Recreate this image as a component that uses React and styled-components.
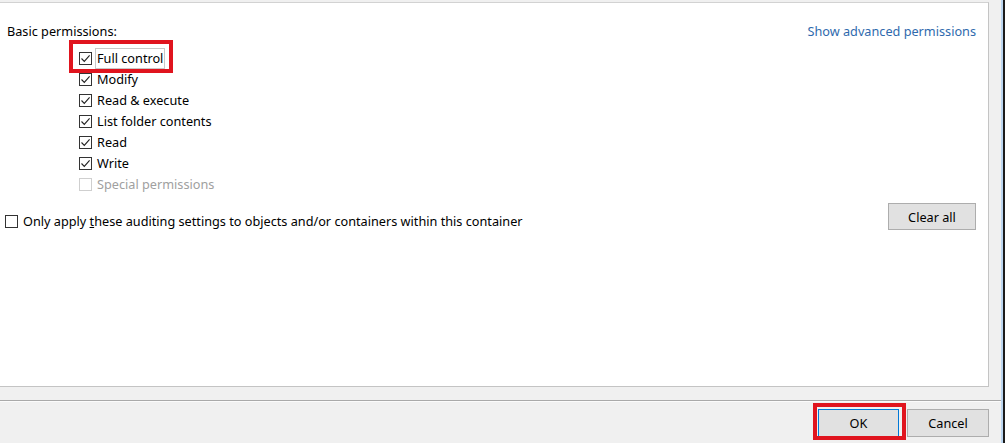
import React from "react";
import styled, { createGlobalStyle } from "styled-components";

const GlobalStyle = createGlobalStyle`
  html, body {
    margin: 0;
    padding: 0;
    width: 1005px;
    height: 443px;
    overflow: hidden;
    background: #f0f0f0;
  }
  body {
    font-family: "Noto Sans", "Open Sans", sans-serif;
    font-size: 12.7px;
    color: #000;
  }
`;

const permissions = [
  { label: "Full control", checked: true, focused: true },
  { label: "Modify", checked: true },
  { label: "Read & execute", checked: true },
  { label: "List folder contents", checked: true },
  { label: "Read", checked: true },
  { label: "Write", checked: true },
  { label: "Special permissions", checked: false, disabled: true },
];

const Check = ({ checked, disabled }) => (
  <Box disabled={disabled}>
    {checked && (
      <svg width="11" height="11" viewBox="0 0 11 11">
        <path d="M1.5 5.5 L4.3 8.4 L9.6 2.4" fill="none" stroke="#222" strokeWidth="1.1" />
      </svg>
    )}
  </Box>
);

const App = () => {
  return (
    <>
      <GlobalStyle />
      <Frame>
        <Main>
          <Panel>
            <Header>
              <Title>Basic permissions:</Title>
              <Link>Show advanced permissions</Link>
            </Header>
            <List>
              {permissions.map((p) => (
                <Item key={p.label} disabled={p.disabled}>
                  {p.focused && <Highlight />}
                  <Check checked={p.checked} disabled={p.disabled} />
                  <Label focused={p.focused}>{p.label}</Label>
                </Item>
              ))}
            </List>
            <ApplyRow>
              <ApplyLabel>
                <Check />
                <Label>
                  Only apply <u>t</u>hese auditing settings to objects and/or containers within this container
                </Label>
              </ApplyLabel>
              <Button wide>Clear all</Button>
            </ApplyRow>
          </Panel>
          <Footer>
            <ButtonSlot>
              <ButtonHighlight />
              <Button primary>OK</Button>
            </ButtonSlot>
            <Button>Cancel</Button>
          </Footer>
        </Main>
        <Edge />
      </Frame>
    </>
  );
};

const Frame = styled.div`
  display: flex;
  width: 1005px;
  height: 443px;
`;

const Main = styled.div`
  flex: 1;
  display: flex;
  flex-direction: column;
  padding-top: 2px;
`;

const Edge = styled.div`
  width: 2px;
  border-left: 2px solid #bcd6f0;
  background: #1b1b1b;
`;

const Panel = styled.div`
  height: 385px;
  margin-right: 12px;
  background: #fff;
  border-top: 1px solid #d2d2d2;
  border-right: 1px solid #c4c4c4;
  border-bottom: 1px solid #c4c4c4;
  padding: 18px 12px 0 5px;
  box-sizing: border-box;
`;

const Header = styled.div`
  display: flex;
  justify-content: space-between;
  line-height: 21px;
`;

const Title = styled.span`
  margin-left: 2px;
`;

const Link = styled.span`
  color: #2f6aad;
  cursor: pointer;
`;

const List = styled.div`
  display: flex;
  flex-direction: column;
  margin-top: 6px;
  padding-left: 74px;
`;

const Item = styled.label`
  position: relative;
  display: flex;
  align-items: center;
  height: 21px;
  gap: 4px;
  color: ${(p) => (p.disabled ? "#a0a0a0" : "#000")};
`;

const Box = styled.span`
  width: 13px;
  height: 13px;
  box-sizing: border-box;
  border: 1px solid ${(p) => (p.disabled ? "#cfcfcf" : "#333")};
  background: #fff;
  display: flex;
  align-items: center;
  justify-content: center;
  flex-shrink: 0;
`;

const Label = styled.span`
  line-height: 19px;
  padding: 0 1px;
  border: 1px solid ${(p) => (p.focused ? "#c8c8c8" : "transparent")};
  margin-left: -1px;
  white-space: nowrap;
`;

const Highlight = styled.span`
  position: absolute;
  left: -10px;
  top: -8px;
  width: 104px;
  height: 33px;
  box-sizing: border-box;
  border: 4px solid #e0141e;
  pointer-events: none;
`;

const ApplyRow = styled.div`
  display: flex;
  justify-content: space-between;
  align-items: flex-start;
  margin-top: 8px;
`;

const ApplyLabel = styled.label`
  display: flex;
  align-items: center;
  height: 21px;
  gap: 4px;
  margin-top: 8px;
`;

const Button = styled.button`
  width: ${(p) => (p.wide ? "88px" : p.primary ? "81px" : "82px")};
  height: ${(p) => (p.wide ? "27px" : "28px")};
  box-sizing: border-box;
  background: #e1e1e1;
  border: 1px solid ${(p) => (p.primary ? "#0078d7" : "#adadad")};
  font: inherit;
  color: #000;
  padding: 0;
`;

const Footer = styled.div`
  flex: 1;
  margin-top: 13px;
  border-top: 1px solid #a9a9a9;
  box-shadow: inset 0 1px 0 #fbfbfb;
  display: flex;
  justify-content: flex-end;
  align-items: flex-start;
  gap: 8px;
  padding: 8px 12px 0 0;
`;

const ButtonSlot = styled.div`
  position: relative;
  display: flex;
`;

const ButtonHighlight = styled.span`
  position: absolute;
  left: -5px;
  top: -6px;
  width: 93px;
  height: 37px;
  box-sizing: border-box;
  border: 4px solid #e0141e;
  pointer-events: none;
`;

export default App;
